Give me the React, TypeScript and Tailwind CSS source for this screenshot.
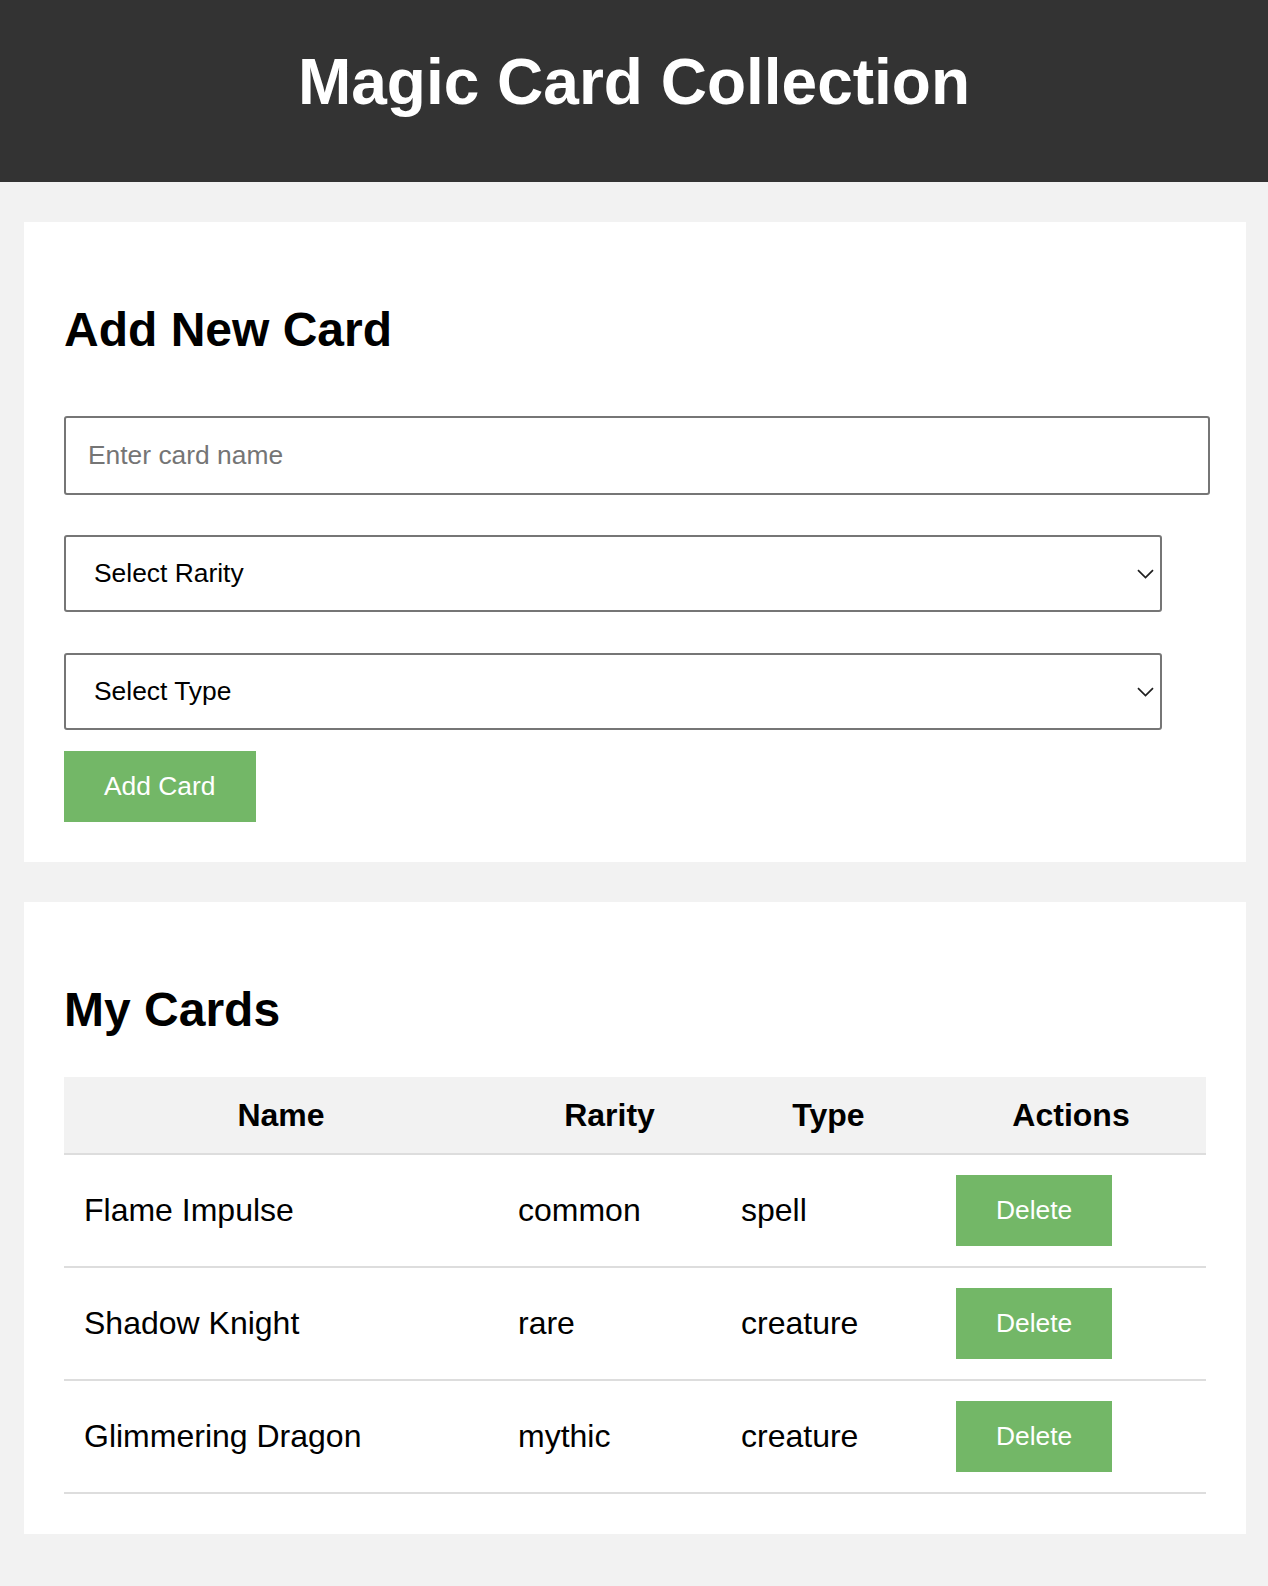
import React from "react";

const cards = [
  { name: "Flame Impulse", rarity: "common", type: "spell" },
  { name: "Shadow Knight", rarity: "rare", type: "creature" },
  { name: "Glimmering Dragon", rarity: "mythic", type: "creature" },
];

const Chevron = () => (
  <svg
    className="pointer-events-none absolute right-[8px] top-1/2 -translate-y-1/2"
    width="17"
    height="10"
    viewBox="0 0 17 10"
    fill="none"
  >
    <path d="M1 1.2 L8.5 8.6 L16 1.2" stroke="#1f1f1f" strokeWidth="1.7" />
  </svg>
);

const SelectBox = ({ label, options }: { label: string; options: string[] }) => (
  <div className="relative w-[1098px]">
    <select className="h-[77px] w-full appearance-none rounded-[3px] border-2 border-[#767676] bg-white pl-[28px] text-[26.4px] text-black outline-none">
      <option value="">{label}</option>
      {options.map((o) => (
        <option key={o} value={o}>
          {o}
        </option>
      ))}
    </select>
    <Chevron />
  </div>
);

export default function App() {
  return (
    <div className="min-h-screen bg-[#f2f2f2] font-['Liberation_Sans',Arial,sans-serif] text-black">
      <header className="h-[182px] bg-[#333333] pt-[45px] text-center">
        <h1 className="text-[64px] font-bold leading-[74px] text-white">
          Magic Card Collection
        </h1>
      </header>

      <main className="flex flex-col gap-10 pb-10 pl-6 pr-[22px] pt-10">
        <section className="bg-white p-10">
          <h2 className="mt-10 text-[48px] font-bold leading-[55px]">Add New Card</h2>
          <input
            type="text"
            placeholder="Enter card name"
            className="mt-[59px] h-[79px] w-[calc(100%+4px)] rounded-[3px] border-2 border-[#767676] px-[22px] text-[26.4px] outline-none placeholder:text-[#757575]"
          />
          <div className="mt-10">
            <SelectBox label="Select Rarity" options={["common", "uncommon", "rare", "mythic"]} />
          </div>
          <div className="mt-[41px]">
            <SelectBox label="Select Type" options={["creature", "spell", "artifact", "land"]} />
          </div>
          <button className="mt-[21px] bg-[#73b767] px-10 py-5 text-[26.4px] leading-[30.5px] text-white">
            Add Card
          </button>
        </section>

        <section className="bg-white p-10">
          <h2 className="mt-10 mb-10 text-[48px] font-bold leading-[55px]">My Cards</h2>
          <table className="w-full table-fixed border-collapse text-[32px]">
            <colgroup>
              <col className="w-[434px]" />
              <col className="w-[223px]" />
              <col className="w-[215px]" />
              <col className="w-[270px]" />
            </colgroup>
            <thead>
              <tr className="bg-[#f2f2f2]">
                {["Name", "Rarity", "Type", "Actions"].map((h) => (
                  <th
                    key={h}
                    className="border-b-2 border-[#dddddd] p-5 text-center font-bold leading-[36.8px]"
                  >
                    {h}
                  </th>
                ))}
              </tr>
            </thead>
            <tbody>
              {cards.map((c) => (
                <tr key={c.name}>
                  <td className="border-b-2 border-[#dddddd] p-5 leading-[36.8px]">{c.name}</td>
                  <td className="border-b-2 border-[#dddddd] p-5 leading-[36.8px]">{c.rarity}</td>
                  <td className="border-b-2 border-[#dddddd] p-5 leading-[36.8px]">{c.type}</td>
                  <td className="border-b-2 border-[#dddddd] p-5">
                    <button className="bg-[#73b767] px-10 py-5 text-[26.4px] leading-[31px] text-white">
                      Delete
                    </button>
                  </td>
                </tr>
              ))}
            </tbody>
          </table>
        </section>
      </main>
    </div>
  );
}
